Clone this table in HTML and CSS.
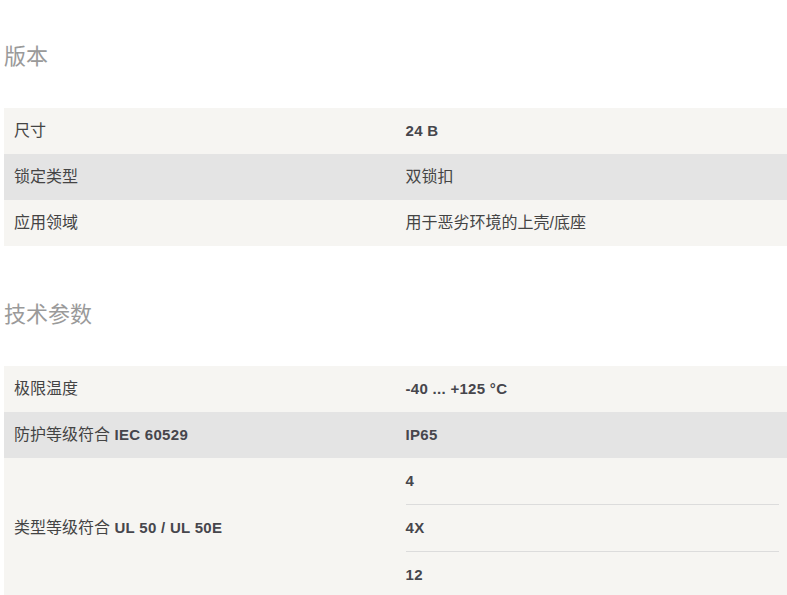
FILE: index.html
```html
<!DOCTYPE html>
<html lang="zh">
<head>
<meta charset="utf-8">
<title>版本 / 技术参数</title>
<link rel="stylesheet" href="styles.css">
</head>
<body>
<div class="page">
  <section class="section first">
    <h2 class="heading">版本</h2>
    <div class="table">
      <div class="row light">
        <div class="cell label">尺寸</div>
        <div class="cell value"><b>24 B</b></div>
      </div>
      <div class="row dark">
        <div class="cell label">锁定类型</div>
        <div class="cell value">双锁扣</div>
      </div>
      <div class="row light">
        <div class="cell label">应用领域</div>
        <div class="cell value">用于恶劣环境的上壳/底座</div>
      </div>
    </div>
  </section>
  <section class="section">
    <h2 class="heading">技术参数</h2>
    <div class="table">
      <div class="row light">
        <div class="cell label">极限温度</div>
        <div class="cell value"><b>-40 ... +125 °C</b></div>
      </div>
      <div class="row dark">
        <div class="cell label">防护等级符合 <b>IEC 60529</b></div>
        <div class="cell value"><b>IP65</b></div>
      </div>
      <div class="row light">
        <div class="cell label">类型等级符合 <b>UL 50 / UL 50E</b></div>
        <div class="cell value multi">
          <div class="item"><b>4</b></div>
          <div class="item"><b>4X</b></div>
          <div class="item"><b>12</b></div>
        </div>
      </div>
    </div>
  </section>
</div>
</body>
</html>
```

FILE: styles.css
```css
html, body {
  margin: 0;
  padding: 0;
  background: #ffffff;
}
body {
  font-family: "Liberation Sans", "Noto Sans CJK SC", sans-serif;
  font-size: 16px;
  color: #444444;
}
.page {
  padding: 42px 0 0 4px;
  width: 783px;
}
.section {
  margin-top: 54px;
}
.section.first {
  margin-top: 0;
}
.heading {
  margin: 0 0 36px 0;
  font-size: 22px;
  line-height: 30px;
  font-weight: normal;
  color: #9a9a9a;
}
.table {
  display: flex;
  flex-direction: column;
}
.row {
  display: grid;
  grid-template-columns: 1fr 1fr;
}
.row.light {
  background: #f6f5f2;
}
.row.dark {
  background: #e4e4e4;
}
.cell {
  display: flex;
  align-items: center;
  padding: 0 10px;
  min-height: 46px;
  line-height: 20px;
  white-space: pre;
}
.cell b {
  font-size: 15px;
  letter-spacing: 0.3px;
  font-weight: bold;
  color: #46464c;
}
.value.multi {
  flex-direction: column;
  align-items: stretch;
  padding-right: 8px;
}
.item {
  height: 46px;
  display: flex;
  align-items: center;
  border-top: 1px solid #dcdcdc;
}
.item:first-child {
  border-top: none;
}
```
